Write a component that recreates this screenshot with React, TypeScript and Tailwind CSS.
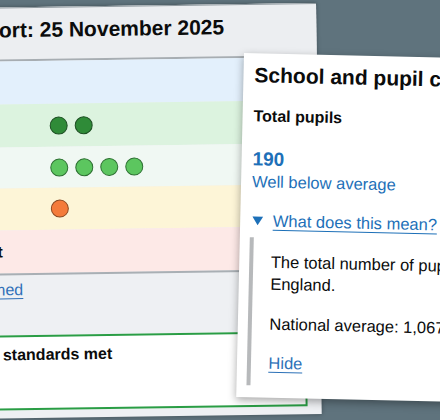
import React from "react";

const font = { fontFamily: '"Liberation Sans", Arial, sans-serif' };

function Dot({ kind }: { kind: "dark" | "light" | "orange" }) {
  const cls =
    kind === "dark"
      ? "bg-[#2f8b38] border-[#1d4f23]"
      : kind === "light"
      ? "bg-[#5cc65f] border-[#2c6f31]"
      : "bg-[#f47b3b] border-[#8a4720]";
  return <div className={`w-[18px] h-[18px] rounded-full border ${cls}`} />;
}

export default function App() {
  return (
    <div
      className="relative w-[440px] h-[420px] overflow-hidden bg-[#5f737d] text-[#0b0c0c]"
      style={font}
    >
      {/* Back panel */}
      <div className="absolute left-[-60px] top-[2.5px] w-[376px] h-[411px] origin-top-right rotate-[-0.8deg] bg-[#eef0f3] shadow-[0_0_4px_rgba(0,0,0,0.35)] flex flex-col">
        <div className="h-[54px] shrink-0 bg-[#eceef1] border-t border-t-[#8f999f] border-b-2 border-b-[#a7adb2] pt-[9px] pl-[58.5px] text-[21px] leading-[26px] font-bold whitespace-nowrap">
          ort: 25 November 2025
        </div>
        <div className="h-[43px] shrink-0 bg-[#e3f0fc]" />
        <div className="h-[43px] shrink-0 bg-[#dcf3df] flex items-center pl-[107.5px] gap-[7px]">
          <Dot kind="dark" />
          <Dot kind="dark" />
        </div>
        <div className="h-[41px] shrink-0 bg-[#f0f8f3] flex items-center pl-[107.5px] gap-[7px]">
          <Dot kind="light" />
          <Dot kind="light" />
          <Dot kind="light" />
          <Dot kind="light" />
        </div>
        <div className="h-[42px] shrink-0 bg-[#fdf5d7] flex items-center pl-[107.5px] gap-[7px]">
          <Dot kind="orange" />
        </div>
        <div className="h-[43px] shrink-0 bg-[#fde9e7] pt-[12px] pl-[54px] text-[16px] leading-[20px] font-bold">
          t
        </div>
        <div className="h-[62px] shrink-0 border-t-2 border-t-[#a9afb4] pt-[4.5px] pl-[52.5px] text-[16px] leading-[20px]">
          <span className="text-[#2f6fb8] underline underline-offset-[3px] decoration-1">
            ned
          </span>
        </div>
        <div className="h-[75px] shrink-0 mr-[14px] bg-white border-2 border-[#2a9d45] pt-[7.5px] pl-[56px] text-[16px] leading-[20px] font-bold whitespace-nowrap">
          standards met
        </div>
      </div>

      {/* Front card */}
      <div className="absolute left-[244px] top-[53px] w-[260px] h-[344px] origin-top-left rotate-[1.3deg] bg-white shadow-[0_3px_8px_rgba(0,0,0,0.35)] pl-[11px] pt-[8.5px] whitespace-nowrap">
        <div className="text-[21px] leading-[26px] font-bold">
          School and pupil characteristics
        </div>
        <div className="mt-[18px] text-[16px] leading-[20px] font-bold">
          Total pupils
        </div>
        <div className="mt-[21.5px] text-[19px] leading-[24px] font-bold text-[#1d70b8]">
          190
        </div>
        <div className="text-[16.5px] leading-[21px] text-[#1d70b8]">
          Well below average
        </div>
        <div className="mt-[18px] flex items-center text-[16.5px] leading-[21px] text-[#1d70b8]">
          <svg width="11" height="9" viewBox="0 0 11 9" className="ml-[0.7px] mr-[10px]">
            <polygon points="0,0 11,0 5.5,9" fill="#1d70b8" />
          </svg>
          <span className="underline underline-offset-[3px] decoration-1">
            What does this mean?
          </span>
        </div>
        <div className="mt-[6px] ml-[-1px] border-l-4 border-[#b7b9bb] pl-[17.5px] pt-[12.5px] pb-[12.5px] text-[16.5px] leading-[22px]">
          <div>
            The total number of pupils in this school
            <br />
            England.
          </div>
          <div className="mt-[18px]">National average: 1,067</div>
          <div className="mt-[17px]">
            <span className="text-[#2d72b8] underline underline-offset-[3px] decoration-1">
              Hide
            </span>
          </div>
        </div>
      </div>
    </div>
  );
}
